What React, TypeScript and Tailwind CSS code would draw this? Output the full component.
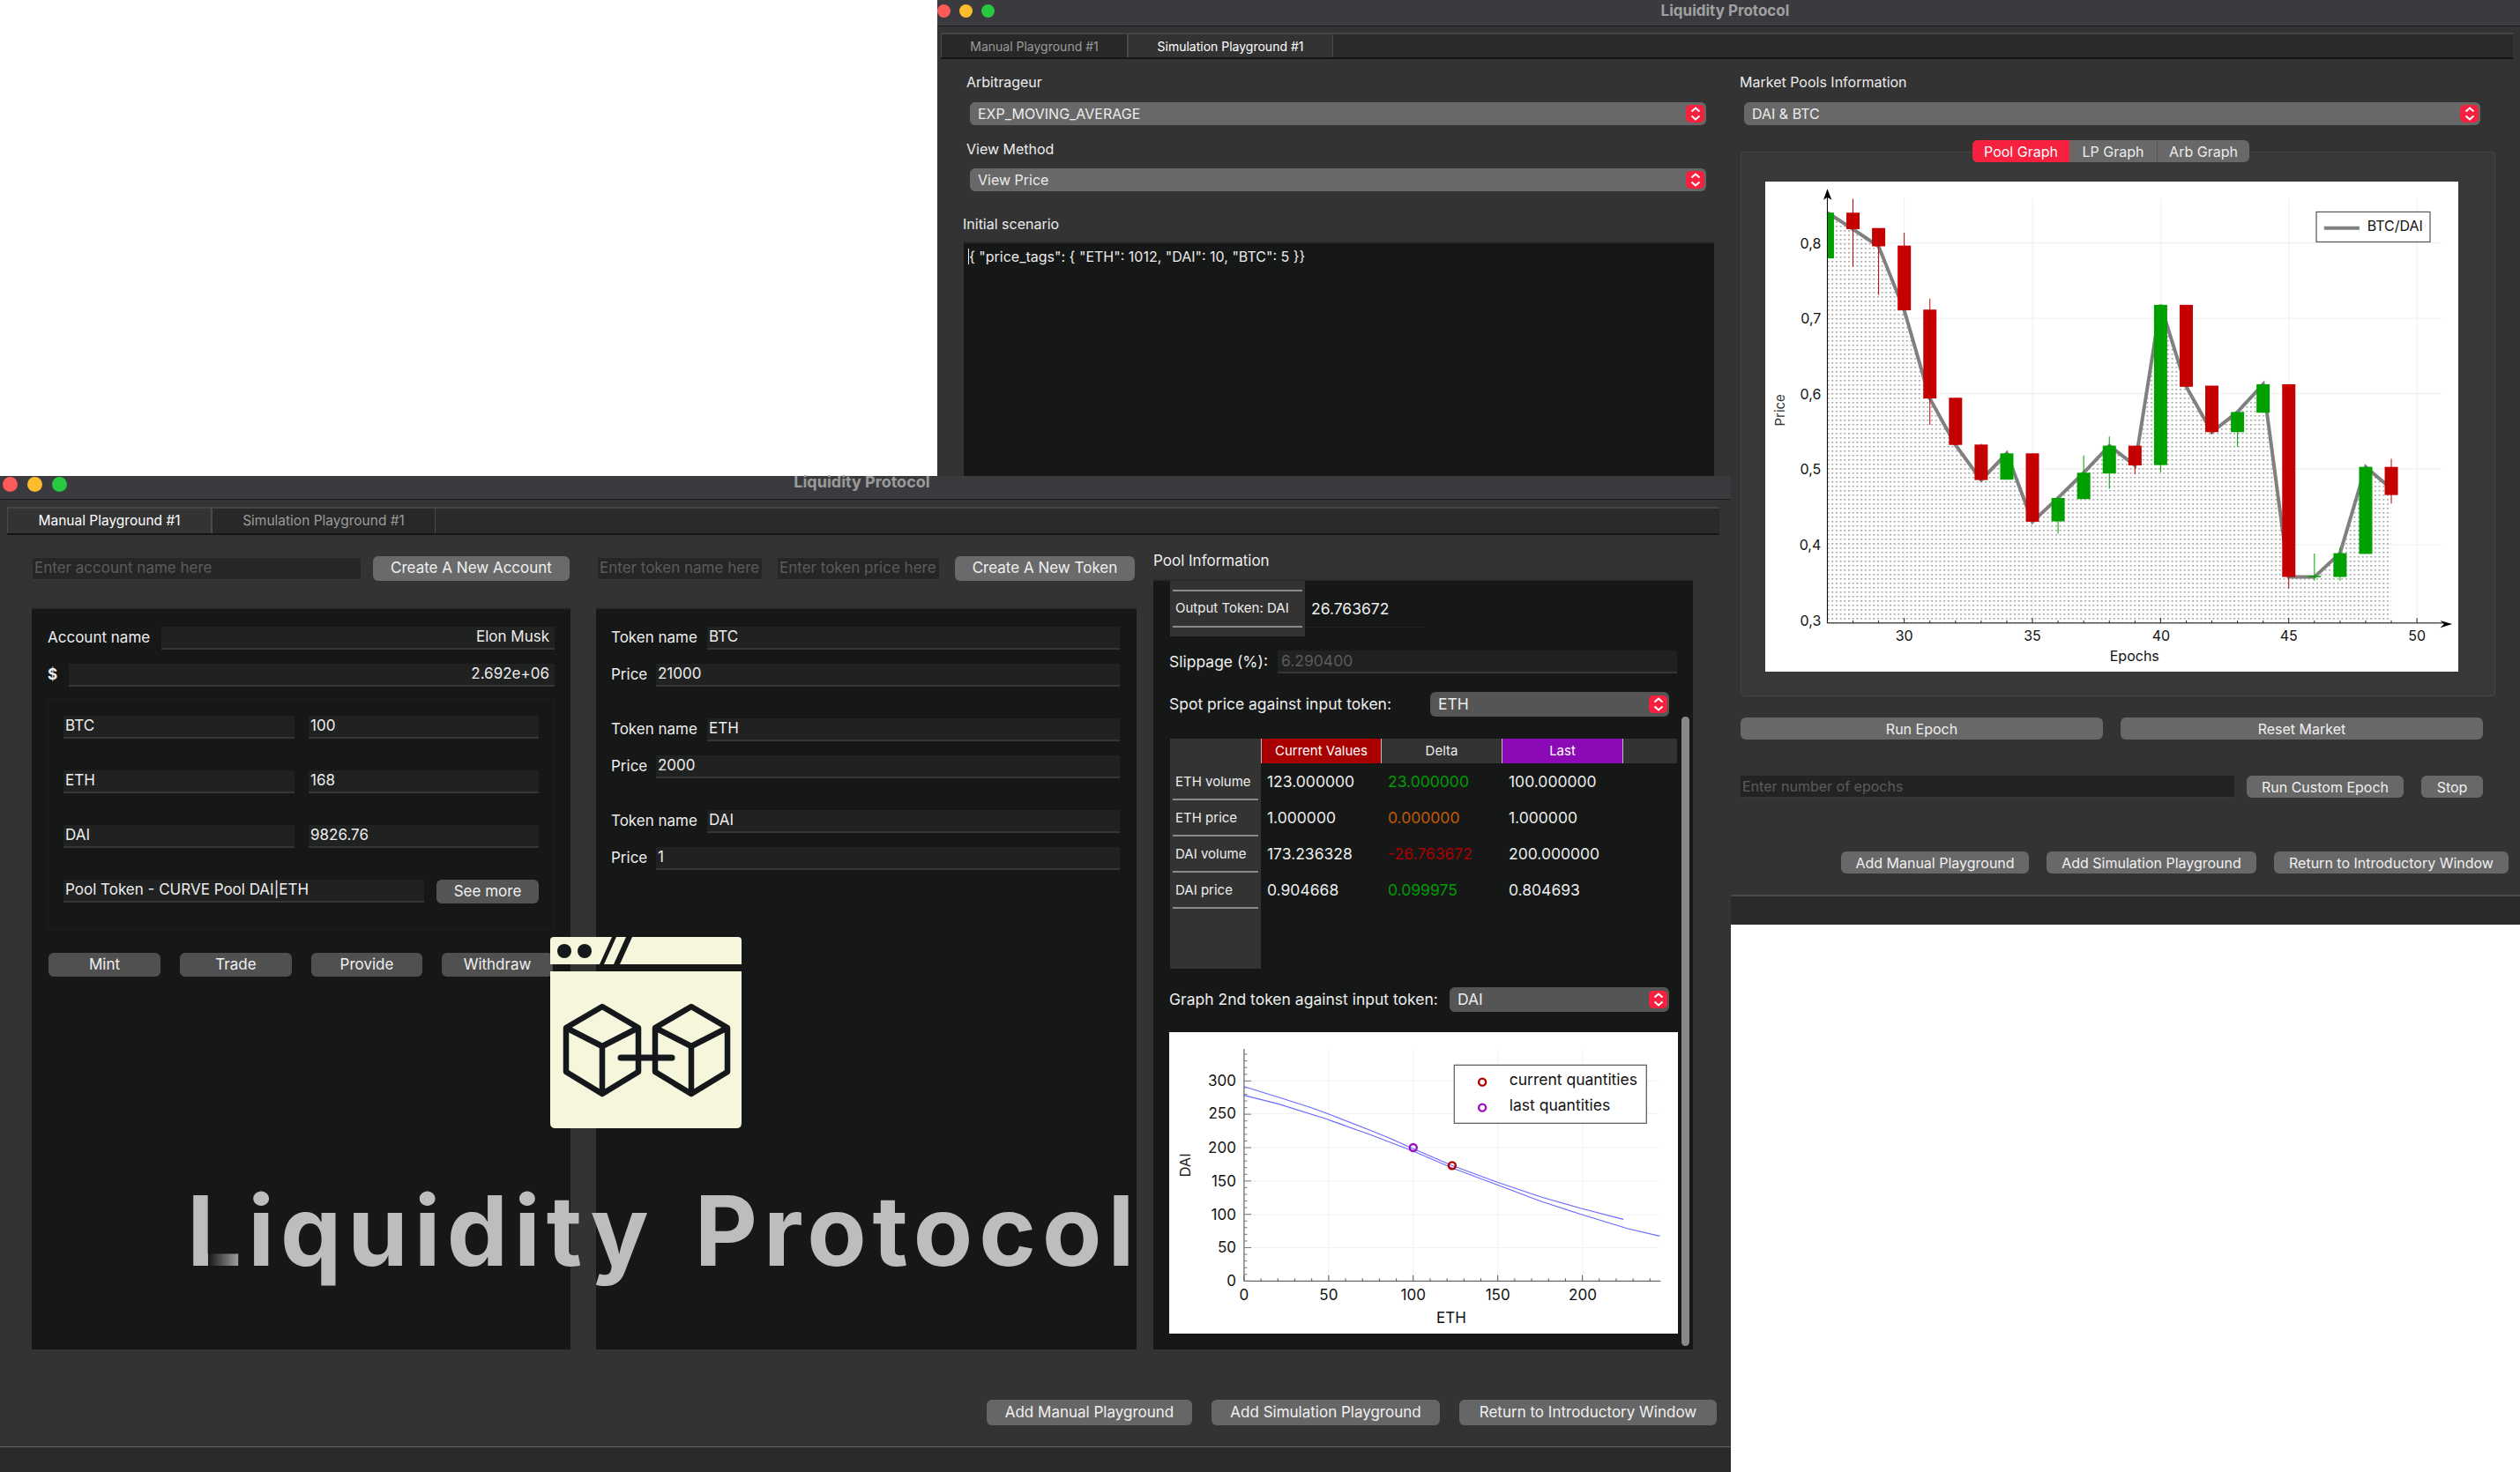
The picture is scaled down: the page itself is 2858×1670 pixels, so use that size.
import type { ReactNode } from 'react';

type Candle = [number, 'g' | 'r', number, number, number?, number?];

// epoch, colour, body top, body bottom, wick top, wick bottom (zoomed reference units)
const candles: Candle[] = [
  [27, 'g', 220, 345, 220, 368],
  [28, 'r', 220, 265, 182, 368],
  [29, 'r', 262, 312, 262, 445],
  [30, 'r', 310, 487, 275, 487],
  [31, 'r', 485, 728, 455, 800],
  [32, 'r', 726, 855],
  [33, 'r', 854, 951, 852, 953],
  [34, 'g', 878, 950],
  [35, 'r', 878, 1065],
  [36, 'g', 1000, 1064, 1000, 1098],
  [37, 'g', 931, 1003, 884, 1003],
  [38, 'g', 857, 933, 832, 975],
  [39, 'r', 857, 911, 857, 935],
  [40, 'g', 472, 910, 472, 930],
  [41, 'r', 472, 696],
  [42, 'r', 693, 820, 693, 825],
  [43, 'g', 765, 820, 765, 860],
  [44, 'g', 689, 767],
  [45, 'r', 689, 1216, 689, 1248],
  [46, 'g', 1213, 1216, 1152, 1226],
  [47, 'g', 1151, 1216, 1135, 1226],
  [48, 'g', 915, 1153],
  [49, 'r', 915, 992, 893, 1015],
];

const closes = [220, 265, 312, 487, 728, 855, 951, 878, 1065, 1000, 931, 857, 911, 472, 696, 820, 765, 689, 1216, 1216, 1151, 915, 975];

const cx = (z: number) => z / 1.823 - 42;
const cy = (z: number) => z / 2.41 - 56;
const ex = (e: number) => 364 + (e - 30) * 53;

function PriceChart() {
  const line = closes.map((c, i) => `${cx(ex(27 + i)).toFixed(1)},${cy(c).toFixed(1)}`).join(' ');
  const area = `${cx(205)},${cy(1342)} ${line} ${cx(ex(49))},${cy(1342)}`;
  const yTicks: [string, number][] = [['0,3', 1335], ['0,4', 1128], ['0,5', 921], ['0,6', 715], ['0,7', 509], ['0,8', 303]];
  const xTicks: [number, number][] = [[30, 364], [35, 629], [40, 895], [45, 1159], [50, 1424]];
  return (
    <svg width={786} height={556} className="block bg-white font-['Inter',sans-serif]">
      <defs>
        <pattern id="hatch" width="4.7" height="5" patternUnits="userSpaceOnUse">
          <rect width="2" height="1.6" fill="#a8a8a8" />
        </pattern>
      </defs>
      {yTicks.slice(1).map(([, z]) => (
        <line key={z} x1={cx(205)} x2={cx(1475)} y1={cy(z)} y2={cy(z)} stroke="#ddd" strokeDasharray="1 1" />
      ))}
      {xTicks.map(([, z]) => (
        <line key={z} x1={cx(z)} x2={cx(z)} y1={cy(182)} y2={cy(1342)} stroke="#ddd" strokeDasharray="1 1" />
      ))}
      <polygon points={area} fill="url(#hatch)" />
      <polyline points={line} fill="none" stroke="#808080" strokeWidth="4" />
      <clipPath id="plot">
        <rect x={cx(205)} y={0} width={700} height={556} />
      </clipPath>
      <g clipPath="url(#plot)">
        {candles.map(([e, c, top, bottom, wt, wb]) => {
          const colour = c === 'g' ? '#00a000' : '#c40000';
          return (
            <g key={e}>
              <line x1={cx(ex(e))} x2={cx(ex(e))} y1={cy(wt ?? top)} y2={cy(wb ?? bottom)} stroke={colour} strokeWidth="1" />
              <rect x={cx(ex(e)) - 7.5} width={15} y={cy(top)} height={Math.max(cy(bottom) - cy(top), 1.5)} fill={colour} />
            </g>
          );
        })}
      </g>
      <line x1={cx(205)} x2={cx(205)} y1={cy(1342)} y2={cy(175)} stroke="#000" />
      <polygon points={`${cx(205)},${cy(155)} ${cx(197)},${cy(185)} ${cx(205)},${cy(178)} ${cx(214)},${cy(185)}`} fill="#000" />
      <line x1={cx(205)} x2={cx(1480)} y1={cy(1342)} y2={cy(1342)} stroke="#000" />
      <polygon points={`${cx(1497)},${cy(1345)} ${cx(1472)},${cy(1335)} ${cx(1480)},${cy(1345)} ${cx(1472)},${cy(1355)}`} fill="#000" />
      {Array.from({ length: 24 }, (_, i) => (
        <line key={i} x1={cx(ex(27 + i))} x2={cx(ex(27 + i))} y1={cy(1342)} y2={cy((27 + i) % 5 === 0 ? 1328 : 1335)} stroke="#222" />
      ))}
      {yTicks.map(([label, z]) => (
        <text key={label} x={cx(192)} y={cy(z) + 6} textAnchor="end" fontSize="16" fill="#111">{label}</text>
      ))}
      {xTicks.map(([label, z]) => (
        <text key={label} x={cx(z)} y={cy(1390)} textAnchor="middle" fontSize="16" fill="#111">{label}</text>
      ))}
      <text x={cx(840)} y={cy(1447)} textAnchor="middle" fontSize="16" fill="#111">Epochs</text>
      <text transform={`translate(${cx(116)} ${cy(760)}) rotate(-90)`} textAnchor="middle" fontSize="15" fill="#333">Price</text>
      <rect x={cx(1216)} y={cy(218)} width={129} height={34} fill="#fff" stroke="#555" strokeWidth="1.2" />
      <line x1={cx(1232)} x2={cx(1305)} y1={cy(262)} y2={cy(262)} stroke="#808080" strokeWidth="4" />
      <text x={cx(1321)} y={cy(270)} fontSize="16" fill="#111">BTC/DAI</text>
    </svg>
  );
}

const qx = (z: number) => z / 2.45 - 26.5;
const qy = (z: number) => z / 3 - 61;
const pts = (list: number[][]) => list.map(([a, b]) => `${qx(a).toFixed(1)},${qy(b).toFixed(1)}`).join(' ');

function CurveChart() {
  const xTicks: [string, number][] = [['0', 273], ['50', 508], ['100', 743], ['150', 978], ['200', 1214]];
  const yTicks: [string, number][] = [['0', 1030], ['50', 916], ['100', 805], ['150', 690], ['200', 575], ['250', 460], ['300', 349]];
  return (
    <svg width={577} height={342} className="block bg-white font-['Inter',sans-serif]">
      {xTicks.slice(1).map(([, z]) => (
        <line key={z} x1={qx(z)} x2={qx(z)} y1={qy(245)} y2={qy(1030)} stroke="#e2e2e2" strokeDasharray="1 1" />
      ))}
      {yTicks.slice(1).map(([, z]) => (
        <line key={z} x1={qx(273)} x2={qx(1425)} y1={qy(z)} y2={qy(z)} stroke="#e2e2e2" strokeDasharray="1 1" />
      ))}
      <line x1={qx(273)} x2={qx(273)} y1={qy(240)} y2={qy(1030)} stroke="#444" />
      <line x1={qx(273)} x2={qx(1430)} y1={qy(1030)} y2={qy(1030)} stroke="#444" />
      {Array.from({ length: 25 }, (_, i) => (
        <line key={i} x1={qx(273 + i * 47)} x2={qx(273 + i * 47)} y1={qy(1030)} y2={qy(i % 5 === 0 ? 1010 : 1021)} stroke="#555" />
      ))}
      {Array.from({ length: 35 }, (_, i) => (
        <line key={i} x1={qx(273)} x2={qx(i % 5 === 0 ? 293 : 282)} y1={qy(1030 - i * 22.7)} y2={qy(1030 - i * 22.7)} stroke="#777" />
      ))}
      <polyline fill="none" stroke="#6a6aff" strokeWidth="1.2" points={pts([[273, 368], [370, 405], [460, 440], [510, 463], [620, 515], [680, 545], [743, 580], [851, 637], [975, 693], [1100, 745], [1210, 783], [1327, 820]])} />
      <polyline fill="none" stroke="#6a6aff" strokeWidth="1.2" points={pts([[273, 398], [370, 428], [500, 478], [620, 530], [743, 588], [851, 645], [975, 702], [1100, 760], [1210, 803], [1340, 852], [1428, 877]])} />
      <circle cx={qx(743)} cy={qy(576)} r="4" fill="none" stroke="#9a10c4" strokeWidth="2.4" />
      <circle cx={qx(851)} cy={qy(637)} r="4" fill="none" stroke="#b00000" strokeWidth="2.4" />
      {xTicks.map(([label, z]) => (
        <text key={label} x={qx(z)} y={qy(1094)} textAnchor="middle" fontSize="17" fill="#111">{label}</text>
      ))}
      {yTicks.map(([label, z]) => (
        <text key={label} x={qx(251)} y={qy(z) + 6} textAnchor="end" fontSize="17" fill="#111">{label}</text>
      ))}
      <text x={qx(849)} y={qy(1173)} textAnchor="middle" fontSize="17" fill="#111">ETH</text>
      <text transform={`translate(${qx(124)} ${qy(636)}) rotate(-90)`} textAnchor="middle" fontSize="16.5" fill="#222">DAI</text>
      <rect x={qx(857)} y={qy(295)} width={218} height={66} fill="#fff" stroke="#555" strokeWidth="1.2" />
      <circle cx={qx(935)} cy={qy(353)} r="4" fill="none" stroke="#b00000" strokeWidth="2.4" />
      <circle cx={qx(935)} cy={qy(440)} r="4" fill="none" stroke="#9a10c4" strokeWidth="2.4" />
      <text x={qx(1010)} y={qy(364)} fontSize="17.5" fill="#111">current quantities</text>
      <text x={qx(1010)} y={qy(450)} fontSize="17.5" fill="#111">last quantities</text>
    </svg>
  );
}

function Cube({ c }: { c: number }) {
  const l = c - 41;
  const r = c + 41;
  return (
    <path
      d={`M${c} 79 L${r} 103 V153 L${c} 178 L${l} 153 V103 Z M${l} 103 L${c} 124 L${r} 103 M${c} 124 V178`}
      fill="none"
      stroke="#15181a"
      strokeWidth="6.5"
      strokeLinejoin="round"
    />
  );
}

function Logo() {
  return (
    <svg width={217} height={217} viewBox="0 0 217 217" className="absolute top-[1063px] left-[624px]">
      <path d="M4 0 H70 L56 31 H0 V4 Q0 0 4 0 Z" fill="#f6f6dc" />
      <path d="M75 0 H86 L72 31 H61 Z" fill="#f6f6dc" />
      <path d="M93 0 H213 Q217 0 217 4 V31 H79 Z" fill="#f6f6dc" />
      <circle cx="16" cy="16" r="8" fill="#15181a" />
      <circle cx="39" cy="16" r="8" fill="#15181a" />
      <path d="M0 39 H217 V211 Q217 217 211 217 H6 Q0 217 0 211 Z" fill="#f6f6dc" />
      <Cube c={59} />
      <Cube c={160} />
      <line x1="80" x2="138" y1="137" y2="137" stroke="#15181a" strokeWidth="7" strokeLinecap="round" />
    </svg>
  );
}

function Lights({ size }: { size: 'sm' | 'lg' }) {
  const dot = size === 'lg' ? 'h-[17px] w-[17px] rounded-full' : 'h-[15px] w-[15px] rounded-full';
  return (
    <div className={size === 'lg' ? 'flex gap-[11px] pl-[3px]' : 'flex gap-[10px] pt-[4px]'}>
      <span className={`${dot} bg-[#fc5b57]`} />
      <span className={`${dot} bg-[#fdbc2e]`} />
      <span className={`${dot} bg-[#28c840]`} />
    </div>
  );
}

function TitleBar({ size, height }: { size: 'sm' | 'lg'; height: string }) {
  return (
    <div className={`${height} grid shrink-0 grid-cols-[1fr_auto_1fr] border-b border-[#1c1c1c] bg-[#3b3a3f] pr-2`}>
      <div className="pt-px">
        <Lights size={size} />
      </div>
      <div className={size === 'lg' ? 'text-[18px] leading-[14px] font-bold text-[#9a9a9a]' : 'pt-[2px] text-[17px] leading-[20px] font-bold text-[#a0a0a0]'}>
        Liquidity Protocol
      </div>
      <div />
    </div>
  );
}

function Tab({ active, width, children, small }: { active?: boolean; width: string; children: ReactNode; small?: boolean }) {
  return (
    <div
      className={`${width} flex items-center justify-center border-x border-[#4a4a4a] ${small ? 'text-[14px]' : 'text-[15.5px]'} ${active ? 'bg-[#333] text-white' : 'bg-[#282828] text-[#9b9b9b]'}`}
    >
      {children}
    </div>
  );
}

function Stepper() {
  return (
    <span className="flex h-[20px] w-[21px] flex-col items-center justify-center rounded-[5px] bg-[#f5213f]">
      <svg width="12" height="16" viewBox="0 0 12 16" fill="none" stroke="#fff" strokeWidth="2">
        <path d="M1.5 5.5 L6 1.5 L10.5 5.5 M1.5 10.5 L6 14.5 L10.5 10.5" />
      </svg>
    </span>
  );
}

function Select({ className, text }: { className: string; text: string }) {
  return (
    <div className={`${className} flex items-center justify-between rounded-[6px] pr-[2px]`}>
      <span className="pl-[9px] text-[#ececec]">{text}</span>
      <Stepper />
    </div>
  );
}

function Button({ className, children }: { className: string; children: ReactNode }) {
  return (
    <div className={`${className} flex shrink-0 items-center justify-center rounded-[6px] whitespace-nowrap text-[#f0f0f0]`}>
      {children}
    </div>
  );
}

function Field({ className = '', children, align = 'left', muted }: { className?: string; children?: ReactNode; align?: 'left' | 'right'; muted?: boolean }) {
  return (
    <div
      className={`${className} flex h-[26px] items-center overflow-hidden border-b-2 border-[#353636] bg-[#202121] px-[2px] whitespace-nowrap ${align === 'right' ? 'justify-end pr-[6px]' : ''} ${muted ? 'text-[#5b5b5b]' : 'text-[#ededed]'}`}
    >
      {children}
    </div>
  );
}

function TokenRows({ name, price }: { name: string; price: string }) {
  return (
    <div className="flex flex-col gap-4">
      <div className="flex items-center">
        <span className="w-[109px] whitespace-nowrap text-[#ededed]">Token name</span>
        <Field className="w-[468px]">{name}</Field>
      </div>
      <div className="flex items-center">
        <span className="w-[51px] text-[#ededed]">Price</span>
        <Field className="w-[526px]">{price}</Field>
      </div>
    </div>
  );
}

const balances: [string, string][] = [['BTC', '100'], ['ETH', '168'], ['DAI', '9826.76']];

const rows: [string, string, string, string, string][] = [
  ['ETH volume', '123.000000', '23.000000', '100.000000', 'text-[#009c00]'],
  ['ETH price', '1.000000', '0.000000', '1.000000', 'text-[#c45a00]'],
  ['DAI volume', '173.236328', '-26.763672', '200.000000', 'text-[#a80000]'],
  ['DAI price', '0.904668', '0.099975', '0.804693', 'text-[#009c00]'],
];

function SimulationWindow() {
  return (
    <div className="absolute top-0 left-[1063px] flex h-[1049px] w-[1795px] flex-col bg-[#333] text-[16px]">
      <TitleBar size="sm" height="h-[30px]" />
      <div className="flex h-[37px] shrink-0 pt-[7px]">
        <div className="ml-[4px] flex w-[1783px] border-y-2 border-t-[#444] border-b-[#151515] bg-[#2a2a2a]">
          <Tab small width="w-[212px]">Manual Playground #1</Tab>
          <Tab small active width="w-[233px]">Simulation Playground #1</Tab>
        </div>
      </div>
      <div className="flex min-h-0 flex-1">
        <div className="w-[897px] shrink-0">
          <div className="mt-[16px] ml-[33px] h-[20px] leading-[20px] text-[#ececec]">Arbitrageur</div>
          <Select className="mt-[13px] ml-[37px] h-[26px] w-[835px] bg-[#686868]" text="EXP_MOVING_AVERAGE" />
          <div className="mt-[17px] ml-[33px] h-[20px] leading-[20px] text-[#ececec]">View Method</div>
          <Select className="mt-[12px] ml-[37px] h-[26px] w-[835px] bg-[#686868]" text="View Price" />
          <div className="mt-[27px] ml-[29px] h-[20px] leading-[20px] text-[#ececec]">Initial scenario</div>
          <div className="mt-[10px] ml-[30px] flex h-[300px] w-[851px] items-start border-t-2 border-[#2a2a2a] bg-[#161818] px-[5px] pt-[3px] leading-[24px] whitespace-pre text-[#ececec]">
            <span className="mt-[3px] h-[18px] w-[1px] bg-[#ececec]" />
            {'{ "price_tags": { "ETH": 1012, "DAI": 10, "BTC": 5 }}'}
          </div>
        </div>
        <div className="flex-1">
          <div className="mt-[16px] ml-[13px] h-[20px] leading-[20px] text-[#ececec]">Market Pools Information</div>
          <Select className="mt-[13px] ml-[18px] h-[26px] w-[835px] bg-[#686868]" text="DAI & BTC" />
          <div className="mt-[30px] ml-[14px] h-[618px] w-[856px] rounded-[4px] border border-[#444] bg-[#383838]">
            <div className="-mt-[14px] ml-[262px] flex h-[25px] w-[314px] overflow-hidden rounded-[6px] bg-[#686868] text-[16px] text-[#ececec]">
              <div className="flex w-[110px] items-center justify-center bg-[#f5213f] text-white">Pool Graph</div>
              <div className="flex w-[100px] items-center justify-center border-r border-[#555]">LP Graph</div>
              <div className="flex flex-1 items-center justify-center">Arb Graph</div>
            </div>
            <div className="mt-[22px] ml-[27px]">
              <PriceChart />
            </div>
          </div>
          <div className="mt-[24px] ml-[14px] flex w-[842px] gap-[20px]">
            <Button className="h-[25px] flex-1 bg-[#686868]">Run Epoch</Button>
            <Button className="h-[25px] flex-1 bg-[#686868]">Reset Market</Button>
          </div>
          <div className="mt-[41px] ml-[14px] flex w-[842px]">
            <Field className="w-[560px] bg-[#232323]" muted>Enter number of epochs</Field>
            <Button className="ml-[14px] h-[25px] w-[178px] bg-[#686868]">Run Custom Epoch</Button>
            <Button className="ml-[20px] h-[25px] w-[70px] bg-[#686868]">Stop</Button>
          </div>
          <div className="mt-[60px] ml-[128px] flex gap-[20px]">
            <Button className="h-[25px] w-[213px] bg-[#686868]">Add Manual Playground</Button>
            <Button className="h-[25px] w-[238px] bg-[#686868]">Add Simulation Playground</Button>
            <Button className="h-[25px] w-[266px] bg-[#686868]">Return to Introductory Window</Button>
          </div>
        </div>
      </div>
      <div className="h-[34px] shrink-0 border-t-2 border-[#4a4a4a] bg-[#2a2a2a]" />
    </div>
  );
}

function ManualWindow() {
  return (
    <div className="absolute top-[540px] left-0 flex h-[1130px] w-[1963px] flex-col bg-[#333] text-[17px]">
      <TitleBar size="lg" height="h-[27px]" />
      <div className="flex h-[40px] shrink-0 pt-[8px]">
        <div className="ml-[8px] flex w-[1942px] border-y-2 border-t-[#444] border-b-[#151515] bg-[#2a2a2a]">
          <Tab active width="w-[232px]">Manual Playground #1</Tab>
          <Tab width="w-[254px]">Simulation Playground #1</Tab>
        </div>
      </div>
      <div className="flex flex-1 pl-[36px]">
        <div className="w-[611px] shrink-0">
          <div className="mt-[24px] flex h-[28px] items-center">
            <Field className="mt-[2px] ml-[1px] w-[372px] bg-[#262626]" muted>Enter account name here</Field>
            <Button className="ml-[14px] h-[28px] w-[223px] bg-[#6a6a6a]">Create A New Account</Button>
          </div>
          <div className="mt-[30px] h-[842px] border-t-2 border-[#2a2a2a] bg-[#161818] px-[18px] pt-[20px]">
            <div className="flex items-center">
              <span className="w-[129px] whitespace-nowrap text-[#ededed]">Account name</span>
              <Field align="right" className="flex-1">Elon Musk</Field>
            </div>
            <div className="mt-[16px] flex items-center">
              <span className="w-[24px] font-bold text-[#ededed]">$</span>
              <Field align="right" className="flex-1">2.692e+06</Field>
            </div>
            <div className="mt-[14px] flex h-[262px] flex-col gap-[36px] border border-[#1c1e1e] px-[17px] pt-[18px]">
              {balances.map(([token, amount]) => (
                <div key={token} className="flex gap-[16px]">
                  <Field className="w-[262px]">{token}</Field>
                  <Field className="flex-1">{amount}</Field>
                </div>
              ))}
              <div className="flex gap-[14px]">
                <Field className="flex-1">Pool Token - CURVE Pool DAI|ETH</Field>
                <Button className="h-[27px] w-[116px] bg-[#555]">See more</Button>
              </div>
            </div>
            <div className="mt-[26px] ml-[1px] flex gap-[22px]">
              <Button className="h-[27px] w-[127px] bg-[#505050]">Mint</Button>
              <Button className="h-[27px] w-[127px] bg-[#505050]">Trade</Button>
              <Button className="h-[27px] w-[126px] bg-[#505050]">Provide</Button>
              <Button className="h-[27px] w-[126px] bg-[#505050]">Withdraw</Button>
            </div>
          </div>
        </div>
        <div className="ml-[29px] w-[613px] shrink-0">
          <div className="mt-[24px] flex h-[28px] items-center">
            <Field className="mt-[2px] ml-[2px] w-[186px] bg-[#262626]" muted>Enter token name here</Field>
            <Field className="mt-[2px] ml-[18px] w-[183px] bg-[#262626]" muted>Enter token price here</Field>
            <Button className="ml-[18px] h-[28px] w-[204px] bg-[#6a6a6a]">Create A New Token</Button>
          </div>
          <div className="mt-[30px] flex h-[842px] flex-col gap-[36px] border-t-2 border-[#2a2a2a] bg-[#161818] pt-[20px] pl-[17px]">
            <TokenRows name="BTC" price="21000" />
            <TokenRows name="ETH" price="2000" />
            <TokenRows name="DAI" price="1" />
          </div>
        </div>
        <div className="relative ml-[19px] w-[612px] shrink-0 text-[17.5px]">
          <div className="mt-[19px] h-[20px] text-[17px] leading-[20px] text-[#ededed]">Pool Information</div>
          <div className="relative mt-[11px] h-[874px] border-t-2 border-[#2a2a2a] bg-[#161818] pl-[18px] text-[#ededed]">
            <div className="ml-px flex h-[63px] w-[575px]">
              <div className="flex h-full w-[153px] flex-col bg-[#333] px-[3px] pt-[10px] text-[15px]">
                <div className="flex h-[43px] items-center border-y-2 border-[#8a8a8a] pl-[3px] whitespace-nowrap">Output Token: DAI</div>
              </div>
              <div className="mt-[12px] flex h-[41px] w-[136px] items-center border-b border-[#222] pl-[7px]">26.763672</div>
            </div>
            <div className="mt-[16px] flex items-center">
              <span className="w-[123px]">Slippage (%):</span>
              <Field muted className="w-[453px] bg-[#1c1d1d] pl-[4px]">6.290400</Field>
            </div>
            <div className="mt-[21px] flex h-[28px] items-center">
              <span className="w-[296px] whitespace-nowrap">Spot price against input token:</span>
              <Select className="h-[28px] w-[271px] bg-[#555]" text="ETH" />
            </div>
            <div className="mt-[25px] ml-px flex h-[261px] w-[575px] text-[15px]">
              <div className="flex w-[103px] flex-col bg-[#333] px-[3px]">
                <div className="h-[29px]" />
                {rows.map(([label]) => (
                  <div key={label} className="flex h-[41px] items-center border-b-2 border-[#8a8a8a] pl-[3px] whitespace-nowrap">{label}</div>
                ))}
              </div>
              <div className="flex-1">
                <div className="flex h-[28px] bg-[#333] text-[15px]">
                  <div className="flex w-[137px] items-center justify-center border-x border-[#bbb] bg-[#a80000] text-white">Current Values</div>
                  <div className="flex w-[136px] items-center justify-center">Delta</div>
                  <div className="flex w-[138px] items-center justify-center border-x border-[#bbb] bg-[#8b0ab5] text-white">Last</div>
                </div>
                {rows.map(([label, current, delta, last, colour]) => (
                  <div key={label} className="flex h-[41px] items-center text-[17.5px]">
                    <div className="w-[137px] pl-[7px]">{current}</div>
                    <div className={`w-[136px] pl-[7px] ${colour}`}>{delta}</div>
                    <div className="w-[138px] pl-[8px]">{last}</div>
                  </div>
                ))}
              </div>
            </div>
            <div className="mt-[21px] flex h-[28px] items-center">
              <span className="w-[318px] whitespace-nowrap">Graph 2nd token against input token:</span>
              <Select className="h-[28px] w-[249px] bg-[#555]" text="DAI" />
            </div>
            <div className="mt-[23px]">
              <CurveChart />
            </div>
            <div className="absolute top-[154px] right-[4px] h-[714px] w-[9px] rounded-full bg-[#888]" />
          </div>
        </div>
      </div>
      <div className="mb-[24px] flex justify-end gap-[22px] pr-[16px]">
        <Button className="h-[29px] w-[233px] bg-[#666]">Add Manual Playground</Button>
        <Button className="h-[29px] w-[259px] bg-[#666]">Add Simulation Playground</Button>
        <Button className="h-[29px] w-[292px] bg-[#666]">Return to Introductory Window</Button>
      </div>
      <div className="h-[29px] shrink-0 border-t border-[#666] bg-[#2a2a2a]" />
    </div>
  );
}

export default function App() {
  return (
    <div className="relative h-[1670px] w-[2858px] overflow-hidden bg-white font-['Inter',sans-serif]">
      <SimulationWindow />
      <ManualWindow />
      <div className="absolute top-[1330px] left-[212px] text-[110px] leading-[133px] font-bold tracking-[7px] [word-spacing:12px] whitespace-nowrap text-[#bdbdbd]">
        Liquidity Protocol
      </div>
      <div className="absolute top-[1421px] left-[236px] h-[16px] w-[42px] bg-gradient-to-r from-[#161818] to-transparent" />
      <Logo />
    </div>
  );
}
